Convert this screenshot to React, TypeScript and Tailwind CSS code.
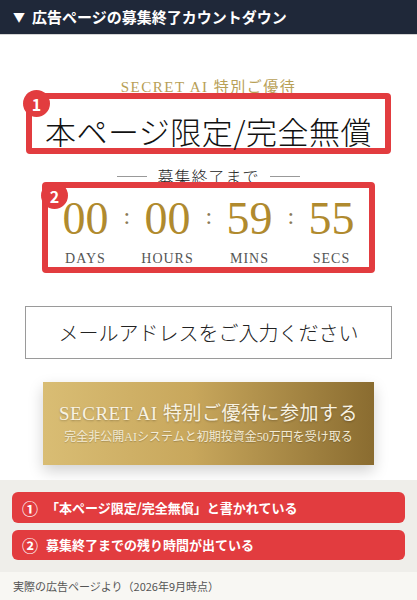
const SANS = "font-['Noto_Sans_CJK_JP','Noto_Sans',sans-serif]";
const SERIF = "font-['Liberation_Serif','Noto_Sans_CJK_JP',serif]";

const COUNTDOWN = [
    { value: '00', label: 'DAYS' },
    { value: '00', label: 'HOURS' },
    { value: '59', label: 'MINS' },
    { value: '55', label: 'SECS' },
];

function Badge({ n, className }: { n: number; className: string }) {
    return (
        <div className={`absolute w-[27px] h-[27px] rounded-full bg-[#e23c3f] text-white flex items-center justify-center text-[16px] font-bold leading-none ${SANS} ${className}`}>
            {n}
        </div>
    );
}

export default function App() {
    return (
        <div className="w-[417px] h-[600px] bg-white overflow-hidden">
            {/* ヘッダー */}
            <div className={`h-[35px] bg-[#1f2839] border-b border-[#d4d4d4] flex items-center pl-[13px] text-white text-[15px] font-bold ${SANS}`}>
                <span className="text-[12px] mr-[7px]">▼</span>
                <span>広告ページの募集終了カウントダウン</span>
            </div>

            {/* タイトル */}
            <div className={`mt-[45px] text-center text-[15px] leading-[15px] tracking-[1.5px] text-[#b8a056] ${SERIF}`}>
                SECRET AI 特別ご優待
            </div>

            {/* 1: 本ページ限定 */}
            <div className="relative mx-[26px] mt-[-2px] h-[61px] border-[6px] border-[#e23c3f] rounded-[4px] flex items-center justify-center pt-[14px]">
                <span className={`text-[31px] leading-none tracking-[0.5px] text-[#111] font-light ${SANS}`}>本ページ限定/完全無償</span>
                <Badge n={1} className="left-[-9px] top-[-9px]" />
            </div>

            {/* 募集終了まで */}
            <div className="mt-[14px] flex items-center justify-center gap-[10px]">
                <div className="w-[30px] h-px bg-[#999]" />
                <span className={`text-[16px] leading-[16px] text-[#222] tracking-[1px] ${SANS} font-light`}>募集終了まで</span>
                <div className="w-[30px] h-px bg-[#999]" />
            </div>

            {/* 2: カウントダウン */}
            <div className="relative ml-[42px] w-[333px] mt-[-2px] h-[91px] border-[6px] border-[#e23c3f] rounded-[4px] bg-white">
                <div className="h-full overflow-hidden flex justify-center pt-[8px]">
                    {COUNTDOWN.map((c, i) => (
                        <div key={c.label} className="flex">
                            {i > 0 && (
                                <div className={`w-[6px] text-center text-[24px] leading-[40px] text-[#8a7a55] ${SERIF}`}>:</div>
                            )}
                            <div className="w-[76px] flex flex-col items-center">
                                <div className={`text-[46px] leading-[46px] text-[#b08a2e] ${SERIF}`}>{c.value}</div>
                                <div className={`mt-[10px] text-[14px] leading-[14px] tracking-[1px] text-[#555] ${SERIF}`}>{c.label}</div>
                            </div>
                        </div>
                    ))}
                </div>
                <Badge n={2} className="left-[-7px] top-[-6px]" />
            </div>

            {/* メール入力 */}
            <div className="mt-[33px] mx-[25px] h-[53px] border-[1.5px] border-[#9a9a9a] flex items-center justify-center">
                <span className={`text-[20px] text-[#222] font-light ${SANS}`}>メールアドレスをご入力ください</span>
            </div>

            {/* 参加ボタン */}
            <div className="mt-[23px] mx-[43px] h-[83px] bg-[linear-gradient(to_right,#d9bd74,#c8a75c_45%,#8a6c30)] shadow-[0_6px_14px_rgba(0,0,0,0.18)] flex flex-col items-center justify-center">
                <div className={`text-[19px] leading-[22px] text-[#f8f2e2] tracking-[0.5px] [text-shadow:0_1px_2px_rgba(0,0,0,0.25)] ${SERIF}`}>
                    SECRET AI 特別ご優待に参加する
                </div>
                <div className={`mt-[6px] text-[12px] leading-[13px] text-[#f3ebd6] [text-shadow:0_1px_1px_rgba(0,0,0,0.2)] ${SERIF}`}>
                    完全非公開AIシステムと初期投資金50万円を受け取る
                </div>
            </div>

            {/* 注釈 */}
            <div className="mt-[15px] bg-[#efeeea] px-[12px] py-[12px] flex flex-col gap-[7px]">
                <div className={`h-[31px] rounded-[6px] bg-[#e23c3f] text-white text-[13px] font-bold flex items-center pl-[10px] ${SANS}`}>
                    <span className="text-[16px] mr-[8px]">①</span>
                    <span>「本ページ限定/完全無償」と書かれている</span>
                </div>
                <div className={`h-[30px] rounded-[6px] bg-[#e23c3f] text-white text-[13px] font-bold flex items-center pl-[10px] ${SANS}`}>
                    <span className="text-[16px] mr-[8px]">②</span>
                    <span>募集終了までの残り時間が出ている</span>
                </div>
            </div>
            <div className={`h-[28px] bg-[#f8f7f3] flex items-center pl-[13px] text-[11px] text-[#555] ${SANS}`}>
                実際の広告ページより（2026年9月時点）
            </div>
        </div>
    );
}
